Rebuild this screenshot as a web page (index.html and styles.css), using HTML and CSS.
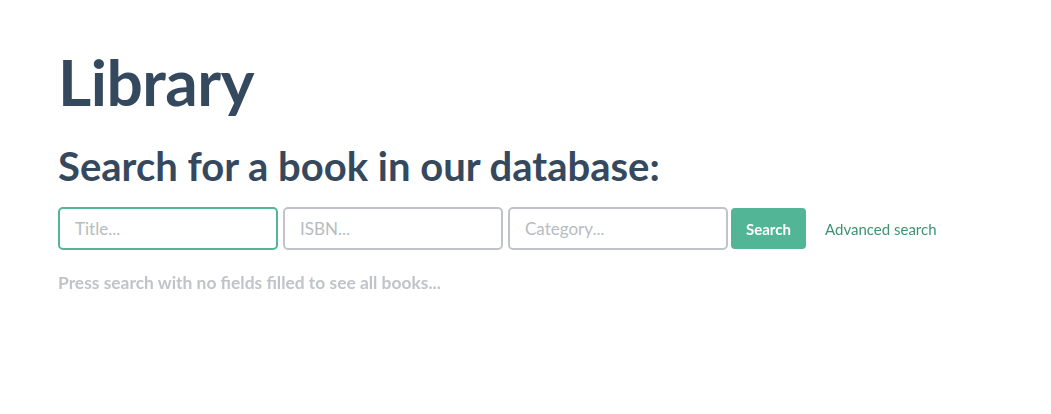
FILE: index.html
```html
<!DOCTYPE html>
<html lang="en">
<head>
<meta charset="utf-8">
<title>Library</title>
<link rel="stylesheet" href="styles.css">
</head>
<body>
<div class="page">
  <h1 class="title">Library</h1>
  <h2 class="subtitle">Search for a book in our database:</h2>
  <form class="search">
    <input class="field field-focus" type="text" placeholder="Title..." autofocus>
    <input class="field" type="text" placeholder="ISBN...">
    <input class="field" type="text" placeholder="Category...">
    <button class="btn" type="button">Search</button>
    <a class="adv" href="#">Advanced search</a>
  </form>
  <p class="hint">Press search with no fields filled to see all books...</p>
</div>
</body>
</html>
```
FILE: styles.css
```css
html, body {
  margin: 0;
  padding: 0;
  background: #fff;
}
body {
  font-family: Lato, "Open Sans", sans-serif;
  color: #35495e;
}
.page {
  padding: 43px 0 0 58px;
}
.title {
  margin: 0;
  font-size: 64px;
  line-height: 77px;
  font-weight: 700;
  letter-spacing: -0.5px;
}
.subtitle {
  margin: 22px 0 0;
  font-size: 40px;
  line-height: 48px;
  font-weight: 700;
}
.search {
  margin-top: 17px;
  display: flex;
  align-items: center;
  gap: 5px;
}
.field {
  box-sizing: border-box;
  width: 220px;
  height: 43px;
  border: 2px solid #c0c4c8;
  border-radius: 5px;
  padding: 0 15px;
  font-family: Lato, sans-serif;
  font-size: 17px;
  color: #35495e;
  caret-color: #35495e;
  outline: none;
  background: #fff;
}
.field::placeholder {
  color: #b6bcc2;
}
.field-focus,
.field:focus {
  border-color: #52b596;
}
.btn {
  box-sizing: border-box;
  height: 41px;
  width: 75px;
  margin-left: -2px;
  border: none;
  border-radius: 4px;
  background: #52b596;
  color: #fff;
  font-family: Lato, sans-serif;
  font-weight: 700;
  font-size: 15px;
  padding: 0;
}
.adv {
  margin-left: 14px;
  color: #3e9373;
  text-decoration: none;
  font-size: 15px;
}
.hint {
  margin: 22px 0 0;
  font-size: 17.4px;
  font-weight: 700;
  color: #c0c4c8;
}
```
